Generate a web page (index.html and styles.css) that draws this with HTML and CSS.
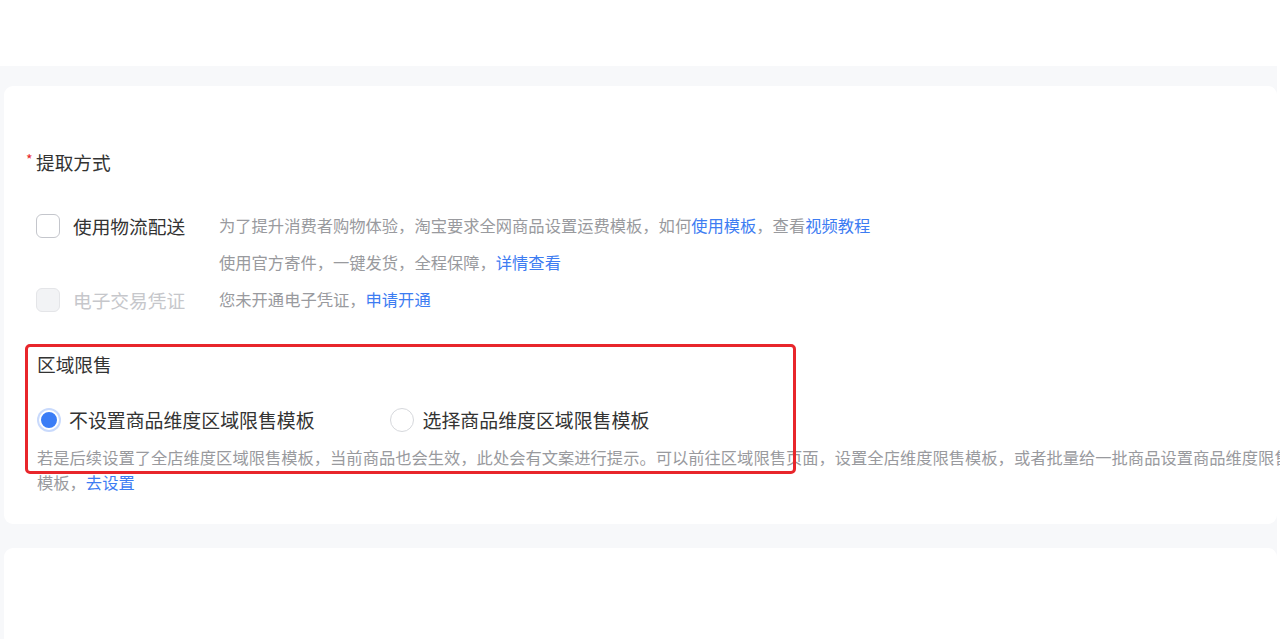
FILE: index.html
```html
<!DOCTYPE html>
<html lang="zh-CN">
<head>
<meta charset="utf-8">
<title>提取方式</title>
<link rel="stylesheet" href="styles.css">
</head>
<body>
<div class="topbar"></div>
<main class="canvas">
  <section class="card">
    <h2 class="field-title"><span class="req">*</span>提取方式</h2>
    <div class="options">
      <div class="opt">
        <span class="checkbox"></span>
        <span class="opt-label">使用物流配送</span>
      </div>
      <div class="opt-desc">
        <p>为了提升消费者购物体验，淘宝要求全网商品设置运费模板，如何<a class="link">使用模板</a>，查看<a class="link">视频教程</a></p>
        <p>使用官方寄件，一键发货，全程保障，<a class="link">详情查看</a></p>
      </div>
      <div class="opt disabled">
        <span class="checkbox"></span>
        <span class="opt-label">电子交易凭证</span>
      </div>
      <div class="opt-desc">
        <p>您未开通电子凭证，<a class="link">申请开通</a></p>
      </div>
    </div>

    <div class="region">
      <h3 class="region-title">区域限售</h3>
      <div class="radios">
        <label class="radio-item"><span class="radio checked"></span>不设置商品维度区域限售模板</label>
        <label class="radio-item"><span class="radio"></span>选择商品维度区域限售模板</label>
      </div>
      <p class="help">若是后续设置了全店维度区域限售模板，当前商品也会生效，此处会有文案进行提示。可以前往区域限售页面，设置全店维度限售模板，或者批量给一批商品设置商品维度限售模板，<a class="link">去设置</a></p>
      <div class="highlight"></div>
    </div>
  </section>
  <section class="card card-next"></section>
</main>
</body>
</html>
```

FILE: styles.css
```css
* { box-sizing: border-box; }
html, body { margin: 0; padding: 0; overflow: hidden; }
body {
  width: 1280px;
  height: 639px;
  background: #ffffff;
  font-family: "Noto Sans CJK SC", "Noto Sans", sans-serif;
  color: #333333;
}
.topbar { height: 66px; background: #ffffff; }
.canvas {
  width: 1277px;
  height: 573px;
  background: #f7f8fa;
  padding: 20px 0 0 4px;
}
.card {
  background: #ffffff;
  border-radius: 9px;
  padding: 63px 0 29px 22px;
}
.card-next {
  margin-top: 24px;
  height: 120px;
  padding: 0;
  border-radius: 9px 9px 0 0;
}
.field-title {
  margin: 0;
  font-size: 18.7px;
  font-weight: 400;
  line-height: 26px;
  color: #333;
  display: flex;
  align-items: flex-start;
}
.req {
  color: #e8262b;
  font-size: 14px;
  line-height: 20px;
  width: 10px;
}
.options {
  margin-top: 32px;
  padding-left: 10px;
  display: grid;
  grid-template-columns: 183px auto;
}
.opt {
  display: flex;
  align-items: center;
  height: 37px;
}
.checkbox {
  width: 24px;
  height: 24px;
  border: 1.5px solid #c4c6cc;
  border-radius: 6px;
  background: #fff;
  margin-right: 13px;
  flex: none;
}
.opt-label { font-size: 18.7px; color: #333; line-height: 26px; }
.opt.disabled .checkbox { background: #f2f3f5; border-color: #e4e5e8; }
.opt.disabled .opt-label { color: #c6c7cb; }
.opt-desc p {
  margin: 0;
  font-size: 16.3px;
  line-height: 37px;
  color: #999a9e;
  white-space: nowrap;
}
.link { color: #3d7cf2; cursor: pointer; }
.region {
  position: relative;
  margin-top: 32.5px;
  padding-left: 11px;
}
.region-title {
  margin: 0;
  font-size: 18.7px;
  font-weight: 400;
  line-height: 26px;
  color: #333;
}
.radios {
  margin-top: 30px;
  display: flex;
  gap: 75px;
  height: 26px;
  align-items: center;
}
.radio-item {
  display: flex;
  align-items: center;
  font-size: 18.9px;
  color: #333;
  line-height: 26px;
}
.radio {
  width: 24px;
  height: 24px;
  border-radius: 50%;
  border: 1px solid #d6d8dc;
  background: #fff;
  margin-right: 9px;
  flex: none;
}
.radio.checked {
  width: 20px;
  height: 20px;
  margin-left: 2px;
  margin-right: 10px;
  border: 2px solid #ffffff;
  background: #3b7df6;
  box-shadow: 0 0 0 2px #c9dafc;
}
.help {
  margin: 12.5px 0 0 0;
  width: 1262px;
  font-size: 16.3px;
  line-height: 25px;
  color: #999a9e;
}
.highlight {
  position: absolute;
  left: -1px;
  top: -7px;
  width: 771px;
  height: 130px;
  border: 3px solid #e8262b;
  border-radius: 5px;
  pointer-events: none;
}
```
